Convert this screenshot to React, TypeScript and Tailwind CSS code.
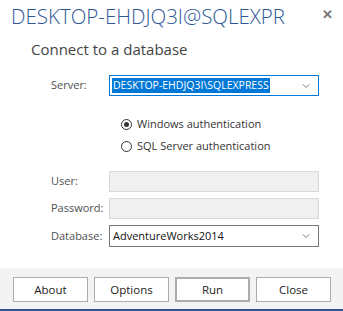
import { ChevronDown } from 'lucide-react';

const font = { fontFamily: '"Open Sans", "Noto Sans", sans-serif' };

function Field({ label, children }: { label: string; children: React.ReactNode }) {
  return (
    <div className="flex items-center">
      <span className="w-[58px] text-[11px] text-[#505050]">{label}</span>
      {children}
    </div>
  );
}

function Radio({ checked, label }: { checked?: boolean; label: string }) {
  return (
    <label className="flex h-[16px] items-center gap-[5px] text-[11px] text-[#333]">
      <span className="flex h-[11px] w-[11px] items-center justify-center rounded-full border border-[#333]">
        {checked && <span className="h-[5px] w-[5px] rounded-full bg-[#333]" />}
      </span>
      {label}
    </label>
  );
}

function Button({ label, primary }: { label: string; primary?: boolean }) {
  return (
    <button
      className={
        'h-[25px] w-[75px] bg-white text-[11.5px] text-[#222] ' +
        (primary ? 'border-2 border-[#acacac]' : 'border border-[#acacac]')
      }
    >
      {label}
    </button>
  );
}

export default function App() {
  return (
    <div className="flex h-[311px] w-[343px] flex-col bg-white" style={font}>
      <div className="flex items-start justify-between pl-[11px] pr-[10px] pt-[2px]">
        <h1 className="text-[20.5px] font-light leading-[28px] text-[#2b5797]">DESKTOP-EHDJQ3I@SQLEXPR</h1>
        <span className="mt-[5px] text-[13px] font-bold leading-[14px] text-[#777]">✕</span>
      </div>
      <p className="mt-[9px] pl-[31px] text-[15px] leading-[20px] text-[#444]">Connect to a database</p>

      <div className="mt-[16px] flex flex-col pl-[51px]">
        <Field label="Server:">
          <div className="flex h-[21px] w-[210px] items-center justify-between border border-[#0078d7] pl-[2px] pr-[6px]">
            <span className="bg-[#0078d7] px-[1px] text-[10.5px] leading-[15px] text-white">DESKTOP-EHDJQ3I\SQLEXPRESS</span>
            <ChevronDown size={12} strokeWidth={1.5} className="text-[#555]" />
          </div>
        </Field>

        <div className="mt-[20px] flex flex-col gap-[6px] pl-[70px]">
          <Radio checked label="Windows authentication" />
          <Radio label="SQL Server authentication" />
        </div>

        <div className="mt-[17px] flex flex-col gap-[6px]">
          <Field label="User:">
            <div className="h-[21px] w-[210px] border border-[#d9d9d9] bg-[#f0f0f0]" />
          </Field>
          <Field label="Password:">
            <div className="h-[21px] w-[210px] border border-[#d9d9d9] bg-[#f0f0f0]" />
          </Field>
          <Field label="Database:">
            <div className="flex h-[22px] w-[210px] items-center justify-between border border-[#7a7a7a] pl-[3px] pr-[6px]">
              <span className="text-[11px] text-[#111]">AdventureWorks2014</span>
              <ChevronDown size={12} strokeWidth={1.5} className="text-[#555]" />
            </div>
          </Field>
        </div>
      </div>

      <div className="mt-auto flex h-[41px] items-start gap-[6px] bg-[#f3f3f3] pl-[13px] pt-[9px]">
        <Button label="About" />
        <Button label="Options" />
        <Button label="Run" primary />
        <Button label="Close" />
      </div>
      <div className="h-[2px] bg-[#2b579a]" />
    </div>
  );
}
